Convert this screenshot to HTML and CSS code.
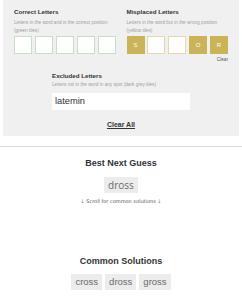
FILE: index.html
```html
<!DOCTYPE html>
<html lang="en">
<head>
  <meta charset="UTF-8">
  <meta name="viewport" content="width=device-width, initial-scale=1.0">
  <title>Wordle Helper</title>
  <link rel="stylesheet" href="styles.css">
</head>
<body>
  <div class="panel">
    <div class="columns">
      <div class="group">
        <h3>Correct Letters</h3>
        <p class="hint">Letters in the word and in the correct position (green tiles)</p>
        <div class="tiles">
          <input class="tile green" maxlength="1">
          <input class="tile green" maxlength="1">
          <input class="tile green" maxlength="1">
          <input class="tile green" maxlength="1">
          <input class="tile green" maxlength="1">
        </div>
      </div>
      <div class="group">
        <h3>Misplaced Letters</h3>
        <p class="hint">Letters in the word but in the wrong position (yellow tiles)</p>
        <div class="tiles">
          <input class="tile yellow filled" maxlength="1" value="S">
          <input class="tile yellow" maxlength="1">
          <input class="tile yellow" maxlength="1">
          <input class="tile yellow filled" maxlength="1" value="O">
          <input class="tile yellow filled" maxlength="1" value="R">
        </div>
        <div class="clear-link">Clear</div>
      </div>
    </div>

    <div class="excluded">
      <h3>Excluded Letters</h3>
      <p class="hint">Letters not in the word in any spot (dark grey tiles)</p>
      <input type="text" class="excluded-input" value="latemin">
    </div>

    <div class="clear-all"><a href="#">Clear All</a></div>
  </div>

  <div class="results">
    <h2>Best Next Guess</h2>
    <div class="best-word">dross</div>
    <p class="scroll-note"><span class="arrow">↓&#xFE0E;</span> Scroll for common solutions <span class="arrow">↓&#xFE0E;</span></p>

    <h2 class="common-title">Common Solutions</h2>
    <div class="word-list">
      <span class="word">cross</span>
      <span class="word">dross</span>
      <span class="word">gross</span>
    </div>
  </div>
</body>
</html>
```

FILE: styles.css
```css
:root {
  --panel-bg: #f0f0f0;
  --text-dark: #333;
  --text-muted: #a0a0a0;
  --green-border: #c7dfc5;
  --yellow: #c9b458;
  --yellow-border: #e3d9ae;
  --word-bg: #ececec;
  --word-text: #6a6a6a;
}
body {
  margin: 0;
  font-family: "Liberation Sans", Arial, sans-serif;
  color: var(--text-dark);
  background: #fff;
}
.panel {
  background: var(--panel-bg);
  margin: 0 3px;
  padding: 8px 11px 7px;
}
.columns {
  display: grid;
  grid-template-columns: 1fr 1fr;
  gap: 11px;
}
h3 {
  margin: 0;
  font-size: 6.2px;
  line-height: 8px;
  font-weight: bold;
  color: var(--text-dark);
}
.hint {
  margin: 3px 0 0;
  font-size: 4.7px;
  line-height: 7.5px;
  color: var(--text-muted);
}
.tiles {
  display: flex;
  justify-content: space-between;
  margin-top: 2px;
}
.tile {
  box-sizing: border-box;
  width: 18px;
  height: 18px;
  padding: 0;
  margin: 0;
  background: #fff;
  text-align: center;
  font-family: "Liberation Sans", Arial, sans-serif;
  font-size: 6px;
  color: #fff;
  outline: none;
}
.tile.green {
  border: 1px solid var(--green-border);
}
.tile.yellow {
  border: 1px solid var(--yellow-border);
}
.tile.filled {
  background: var(--yellow);
  border-color: var(--yellow);
}
.clear-link {
  margin-top: 3px;
  text-align: right;
  font-size: 4.7px;
  line-height: 6px;
  color: #555;
}
.excluded {
  width: 138px;
  margin: 9px auto 0;
}
.excluded .hint {
  margin-top: 1px;
}
.excluded-input {
  display: block;
  box-sizing: border-box;
  width: 138px;
  height: 17px;
  margin-top: 4px;
  padding: 0 3px;
  border: none;
  background: #fff;
  font-family: "Liberation Sans", Arial, sans-serif;
  font-size: 9.3px;
  color: var(--text-dark);
  outline: none;
}
.clear-all {
  margin-top: 7px;
  text-align: center;
  line-height: 9px;
}
.clear-all a {
  font-size: 7px;
  font-weight: bold;
  color: var(--text-dark);
}
.results {
  margin-top: 10px;
  border-top: 1px solid #dcdcdc;
  text-align: center;
}
h2 {
  margin: 11px 0 0;
  font-size: 9px;
  line-height: 10px;
  font-weight: bold;
  color: var(--text-dark);
}
.best-word {
  display: inline-block;
  margin-top: 9px;
  padding: 0 4px;
  height: 16px;
  line-height: 16px;
  background: var(--word-bg);
  font-family: "Open Sans", sans-serif;
  font-size: 10px;
  color: var(--word-text);
}
.scroll-note {
  margin: 5px 0 0;
  font-family: "DejaVu Sans", Verdana, sans-serif;
  font-size: 5px;
  line-height: 7px;
  color: #555;
}
.arrow {
  font-family: "DejaVu Sans", sans-serif;
  color: #777;
  font-variant-emoji: text;
}
.common-title {
  margin-top: 51px;
}
.word-list {
  display: flex;
  justify-content: center;
  gap: 3px;
  margin-top: 8px;
}
.word {
  padding: 0 4px;
  height: 16px;
  line-height: 16px;
  background: var(--word-bg);
  font-size: 9.5px;
  color: var(--word-text);
}
```
